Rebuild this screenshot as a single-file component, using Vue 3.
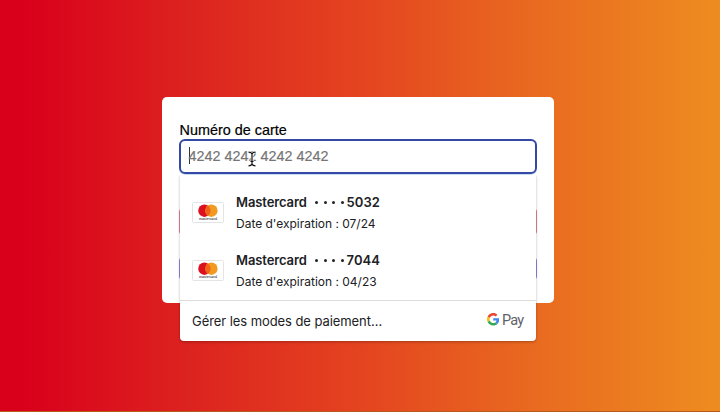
<script setup>
const cards = [
  { brand: 'Mastercard', last4: '5032', expiry: '07/24' },
  { brand: 'Mastercard', last4: '7044', expiry: '04/23' },
]
</script>

<template>
  <main class="page">
    <section class="card">
      <label class="label"><span>Numéro de carte</span></label>
      <div class="field">
        <span class="caret"></span>
        <span class="placeholder">4242 4242 4242 4242</span>
        <svg class="pointer" viewBox="0 0 10 16">
          <path class="halo" d="M1.5 1.2Q4.3 1.2 5 3Q5.7 1.2 8.5 1.2M5 3V13M1.5 14.8Q4.3 14.8 5 13Q5.7 14.8 8.5 14.8M3.5 10.5H6.5" />
          <path class="beam" d="M1.5 1.2Q4.3 1.2 5 3Q5.7 1.2 8.5 1.2M5 3V13M1.5 14.8Q4.3 14.8 5 13Q5.7 14.8 8.5 14.8M3.5 10.5H6.5" />
        </svg>
      </div>
      <div class="behind red"></div>
      <div class="behind blue"></div>

      <div class="popup">
        <ul class="list">
          <li v-for="c in cards" :key="c.last4" class="row">
            <svg class="logo" viewBox="0 0 32 21">
              <rect x=".5" y=".5" width="31" height="20" rx="1" fill="#fff" stroke="#e4e4e4" />
              <circle cx="12.4" cy="8.7" r="6.2" fill="#dc101f" />
              <circle cx="19.4" cy="8.7" r="6.2" fill="#f29a20" />
              <path d="M15.9 3.6a6.2 6.2 0 0 1 0 10.2a6.2 6.2 0 0 1 0-10.2z" fill="#f06318" />
              <text x="16" y="18" text-anchor="middle" textLength="18" lengthAdjust="spacingAndGlyphs" class="wordmark">mastercard</text>
            </svg>
            <div class="info">
              <div class="title"><span class="brand">{{ c.brand }}</span><span class="dots"><i v-for="n in 4" :key="n"></i></span><span class="last">{{ c.last4 }}</span></div>
              <div class="expiry">Date d'expiration : {{ c.expiry }}</div>
            </div>
          </li>
        </ul>
        <footer class="footer">
          <span class="manage">Gérer les modes de paiement…</span>
          <span class="gpay">
            <svg class="g" viewBox="0 0 48 48">
              <path fill="#ea4335" d="M24 9.5c3.54 0 6.71 1.22 9.21 3.6l6.85-6.85C35.9 2.38 30.47 0 24 0 14.62 0 6.51 5.38 2.56 13.22l7.98 6.19C12.43 13.72 17.74 9.5 24 9.5z" />
              <path fill="#4285f4" d="M46.98 24.55c0-1.57-.15-3.09-.38-4.55H24v9.02h12.94c-.58 2.96-2.26 5.48-4.78 7.18l7.73 6c4.51-4.18 7.09-10.36 7.09-17.65z" />
              <path fill="#fbbc05" d="M10.53 28.59A14.5 14.5 0 0 1 9.77 24c0-1.6.27-3.14.76-4.59l-7.98-6.19A23.9 23.9 0 0 0 0 24c0 3.88.92 7.54 2.56 10.78l7.97-6.19z" />
              <path fill="#34a853" d="M24 48c6.48 0 11.93-2.13 15.89-5.81l-7.73-6c-2.15 1.45-4.92 2.3-8.16 2.3-6.26 0-11.57-4.22-13.47-9.91l-7.98 6.19C6.51 42.62 14.62 48 24 48z" />
            </svg>
            <span class="pay">Pay</span>
          </span>
        </footer>
      </div>
    </section>
  </main>
</template>

<style>
body {
  margin: 0;
  overflow: hidden;
}
</style>

<style scoped>
.page {
  box-sizing: border-box;
  width: 720px;
  height: 412px;
  padding: 97px 0 0 162px;
  background: linear-gradient(90deg, #d9001b 0%, #d9001b 3%, #dc211f 25%, #e44420 50%, #e96b20 75%, #ee8c20 100%);
  border-bottom: 1px solid #b85a1c;
}
.card {
  position: relative;
  box-sizing: border-box;
  width: 392px;
  height: 205.5px;
  padding: 24px 17px 0;
  display: flex;
  flex-direction: column;
  background: #fff;
  border-radius: 5px;
}
.label {
  height: 18px;
  padding-left: 0.5px;
  line-height: 19px;
  font-family: "Liberation Sans", Arial, sans-serif;
  font-size: 14.4px;
  color: #000;
  -webkit-text-stroke: 0.2px #000;
  white-space: nowrap;
}
.field {
  position: relative;
  box-sizing: border-box;
  height: 35px;
  padding: 0 0 2px 7.5px;
  display: flex;
  align-items: center;
  border: 2px solid #3549a4;
  border-radius: 6px;
  box-shadow: 0 0.5px 0.5px #8dbcf0;
  font-family: "Liberation Sans", Arial, sans-serif;
}
.caret {
  width: 1px;
  height: 17px;
  margin-right: -1px;
  background: #333;
}
.placeholder {
  font-size: 14.4px;
  line-height: 20px;
  color: #757575;
  -webkit-text-stroke: 0.2px #757575;
  white-space: nowrap;
}
.pointer {
  position: absolute;
  left: 65.5px;
  top: 10px;
  width: 10px;
  height: 16px;
  fill: none;
}
.halo {
  stroke: #fff;
  stroke-width: 2.6;
}
.beam {
  stroke: #111;
  stroke-width: 1.2;
}
.behind {
  border-radius: 5px;
}
.red {
  height: 29px;
  margin-top: 33px;
  background: #e58088;
}
.blue {
  height: 25px;
  margin-top: 20px;
  background: #8984dc;
}
.popup {
  position: absolute;
  left: 18px;
  top: 78px;
  width: 356px;
  height: 166px;
  display: flex;
  flex-direction: column;
  background: #fff;
  border-radius: 0 0 4px 4px;
  box-shadow: 0 1px 3px rgba(0, 0, 0, 0.28);
  clip-path: inset(0 -6px -6px -6px);
  font-family: Inter, sans-serif;
  color: #202124;
}
.list {
  flex: none;
  height: 126px;
  box-sizing: border-box;
  margin: 0;
  padding: 8px 0 0;
  list-style: none;
  border-bottom: 1px solid #dcdcdc;
}
.row {
  height: 58px;
  padding-left: 12px;
  display: flex;
  align-items: center;
}
.logo {
  width: 32px;
  height: 21px;
  margin-right: 12px;
}
.wordmark {
  font-family: Inter, sans-serif;
  font-size: 3.6px;
  font-weight: 500;
  fill: #333;
}
.info {
  display: flex;
  flex-direction: column;
  gap: 4px;
  padding-top: 1px;
}
.title {
  display: flex;
  align-items: center;
  height: 18px;
  line-height: 18px;
  font-size: 13px;
  font-weight: 600;
}
.brand {
  width: 71px;
  letter-spacing: -0.1px;
}
.dots {
  display: flex;
  gap: 5.5px;
  margin: 1px 3px 0 8px;
}
.dots i {
  width: 3px;
  height: 3px;
  border-radius: 50%;
  background: #202124;
}
.last {
  letter-spacing: 0.1px;
}
.expiry {
  height: 18px;
  line-height: 18px;
  font-size: 12px;
  letter-spacing: -0.01px;
  white-space: nowrap;
}
.footer {
  flex: 1;
  padding: 0 13px 0 12px;
  display: flex;
  align-items: center;
  justify-content: space-between;
}
.manage {
  font-size: 13px;
  letter-spacing: -0.07px;
  white-space: nowrap;
}
.gpay {
  display: flex;
  align-items: center;
  gap: 2.5px;
  margin-top: -1px;
}
.g {
  width: 12.5px;
  height: 12.5px;
  margin-top: -2px;
}
.pay {
  font-family: Roboto, sans-serif;
  font-size: 14.5px;
  line-height: 18px;
  letter-spacing: -0.7px;
  margin-right: -0.5px;
  color: #5f6368;
}
</style>
